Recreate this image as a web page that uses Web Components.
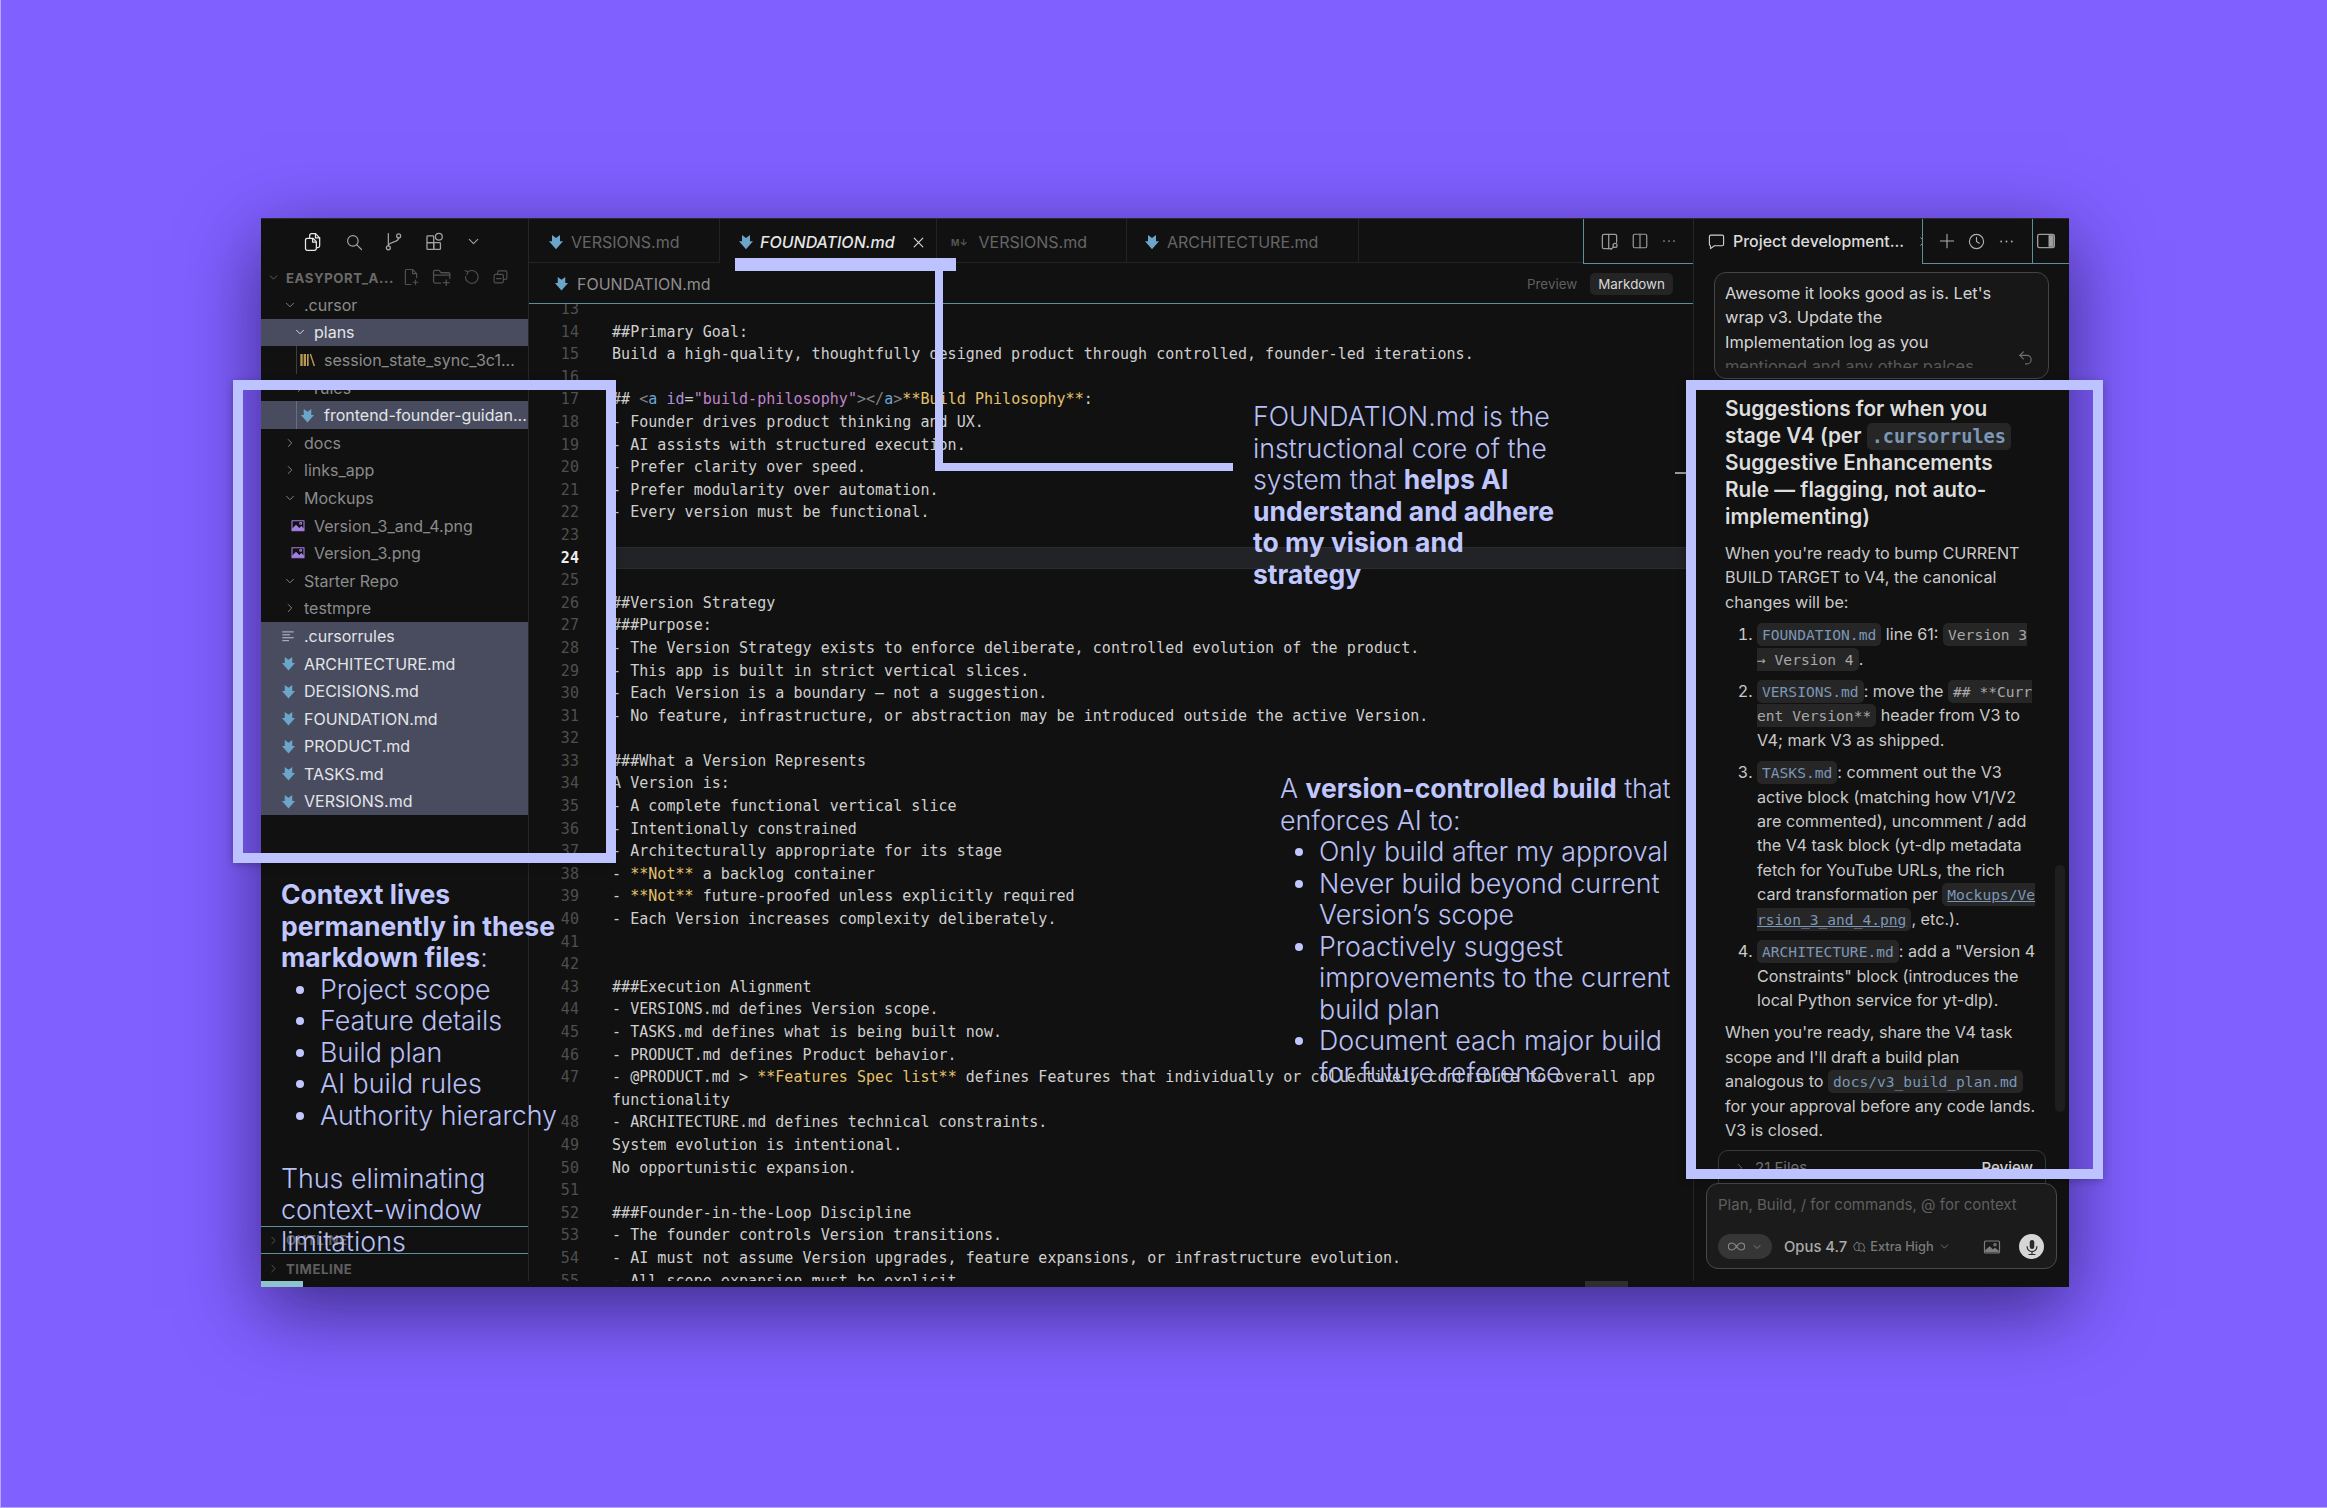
<!DOCTYPE html>
<html lang="en">
<head>
<meta charset="utf-8">
<title>Cursor annotated</title>
<style>
  html, body { margin: 0; padding: 0; }
  body {
    width: 2327px;
    height: 1508px;
    overflow: hidden;
    position: relative;
    box-sizing: border-box;
    padding: 218px 258px 0 261px;
    background: #8060ff;
    box-shadow: inset 1px 0 #b7a8ff, inset 0 -1px #b7a8ff;
    font-family: Inter, "Liberation Sans", sans-serif;
  }
</style>
</head>
<body>

<app-window>
  <side-bar slot="side"></side-bar>
  <editor-pane slot="editor"></editor-pane>
  <chat-panel slot="chat"></chat-panel>
</app-window>

<callout-box style="left:233px;top:380px;width:383px;height:483px"></callout-box>
<callout-box style="left:1686px;top:380px;width:417px;height:799px"></callout-box>
<callout-line style="left:735px;top:258px;width:221px;height:13px"></callout-line>
<callout-line style="left:935px;top:271px;width:8px;height:200px"></callout-line>
<callout-line style="left:935px;top:463px;width:298px;height:8px"></callout-line>

<note-text style="left:1253px;top:401px;width:305px">FOUNDATION.md is the instructional core of the system that <b>helps AI understand and adhere to my vision and strategy</b></note-text>

<note-text style="left:1280px;top:773px;width:397px">
  A <b>version-controlled build</b> that enforces AI to:
  <note-item>Only build after my approval</note-item>
  <note-item>Never build beyond current Version’s scope</note-item>
  <note-item>Proactively suggest improvements to the current build plan</note-item>
  <note-item>Document each major build for future reference</note-item>
</note-text>

<note-text style="left:281px;top:879px;width:285px">
  <b>Context lives permanently in these markdown files</b>:
  <note-item>Project scope</note-item>
  <note-item>Feature details</note-item>
  <note-item>Build plan</note-item>
  <note-item>AI build rules</note-item>
  <note-item>Authority hierarchy</note-item>
  <br>
  Thus eliminating context-window limitations
</note-text>

<script>
const ICONS = {
  files: '<path d="M8 7.5V4.2A2.2 2.2 0 0 1 10.2 2H15l5 5v9.5a2.2 2.2 0 0 1-2.2 2.2H17"/><path d="M15 2v5h5"/><path d="M5.2 7.5H12l4 4v8.3a2.2 2.2 0 0 1-2.2 2.2H5.2A2.2 2.2 0 0 1 3 19.8V9.7a2.2 2.2 0 0 1 2.2-2.2z"/><path d="M11.5 7.5v4.5H16"/>',
  search: '<circle cx="10.5" cy="10.5" r="7"/><path d="M15.8 15.8 22 22"/>',
  branch: '<circle cx="5.5" cy="20" r="2.5"/><circle cx="18.5" cy="5" r="2.5"/><path d="M5.5 17.5V2"/><path d="M18.5 7.5c0 6-13 4.500-13 10"/>',
  blocks: '<rect x="2.500" y="5" width="8.500" height="8.500" rx="1"/><rect x="2.500" y="13.500" width="8.500" height="8.500" rx="1"/><rect x="11" y="13.500" width="8.500" height="8.500" rx="1"/><circle cx="17.500" cy="6" r="4.300"/>',
  down: '<path d="m6 9 6 6 6-6"/>',
  right: '<path d="m9 6 6 6-6 6"/>',
  newfile: '<path d="M12 22H6a1.500 1.500 0 0 1-1.500-1.500v-17A1.500 1.500 0 0 1 6 2h8l5.500 5.500V13"/><path d="M14 2v5.500h5.500"/><path d="M18 16v6M15 19h6"/>',
  newfolder: '<path d="M11 19H3.500A1.500 1.500 0 0 1 2 17.500v-13A1.500 1.500 0 0 1 3.500 3H9l2.500 3H21a1.500 1.500 0 0 1 1.500 1.500V13"/><path d="M2 9h20.500"/><path d="M18 15v7M14.500 18.500h7"/>',
  refresh: '<path d="M7 5.500A9 9 0 1 1 3.500 12"/><path d="M3 3.500 7 5.500 5.500 9.500"/>',
  collapse: '<rect x="3" y="9" width="13" height="12" rx="2"/><path d="M8 9V6a2 2 0 0 1 2-2h9a2 2 0 0 1 2 2v8a2 2 0 0 1-2 2h-3"/><path d="M6.500 15h6"/>',
  markdown: '<path fill="currentColor" stroke="none" d="M6 1.500 12 6l6-4.500V11h4.500L12 23 1.500 11H6z"/>',
  image: '<path d="M3 4h18v15H3z"/><path fill="currentColor" stroke="none" d="M3 19v-3l6-6 5 5 3-3 4 4v3z"/><circle cx="16" cy="8" r="1.500"/>',
  library: '<path fill="currentColor" stroke="none" d="M2 3h3.500v18H2zM7 3h3.500v18H7zM12 3h2.500v18H12zM16 3.500l2-.8L24 20.500l-2 .8z"/>',
  lines: '<path d="M3 5h18M3 10h12M3 15h18M3 20h10"/>',
  bubble: '<path d="M4 3h16a2 2 0 0 1 2 2v11a2 2 0 0 1-2 2H9l-5.500 4V18A2 2 0 0 1 2 16V5a2 2 0 0 1 2-2z"/>',
  plus: '<path d="M12 2v20M2 12h20"/>',
  clock: '<circle cx="12" cy="12" r="10"/><path d="M12 6v6l4 2.500"/>',
  dots: '<circle cx="4.500" cy="12" r="1.300" fill="currentColor" stroke="none"/><circle cx="12" cy="12" r="1.300" fill="currentColor" stroke="none"/><circle cx="19.500" cy="12" r="1.300" fill="currentColor" stroke="none"/>',
  close: '<path d="M4 4l16 16M20 4 4 20"/>',
  split: '<rect x="3" y="3" width="18" height="18" rx="2"/><path d="M12 3v18"/>',
  splitpin: '<path d="M14 21H5a2 2 0 0 1-2-2V5a2 2 0 0 1 2-2h14a2 2 0 0 1 2 2v8"/><path d="M11 3v18"/><circle cx="19" cy="17" r="2.500"/><path d="m17 19-3 3"/>',
  sidepanel: '<rect x="2" y="4" width="20" height="16" rx="2"/><rect fill="currentColor" stroke="none" x="15" y="5" width="6" height="14"/>',
  undo: '<path d="M9 4 4 9l5 5"/><path d="M4 9h10a6 6 0 0 1 6 6v0a6 6 0 0 1-6 6h-2"/>',
  infinity: '<path d="M12 12c-2.500-3.500-4.500-5-6.500-5a5 5 0 0 0 0 10c2 0 4-1.500 6.500-5zm0 0c2.500-3.500 4.500-5 6.500-5a5 5 0 0 1 0 10c-2 0-4-1.500-6.500-5z"/>',
  brain: '<path d="M9 4a3 3 0 0 0-3 3 3.500 3.500 0 0 0-3 3.500A3.500 3.500 0 0 0 4.500 14 3.500 3.500 0 0 0 9 18h3V6.500A3 3 0 0 0 9 4z"/><path d="M12 7a3 3 0 0 1 5-.5 3.500 3.500 0 0 1 3.500 4A3.500 3.500 0 0 1 20 16l2 4-4-2a3.500 3.500 0 0 1-3.500 1L12 18"/>',
  picture: '<rect x="2" y="4" width="20" height="16" rx="1.500"/><path fill="currentColor" stroke="none" d="M3 19v-3l6-5 4 4 3-2 5 4v2z"/><circle cx="16" cy="9" r="1.500"/>',
  mic: '<rect x="9" y="2.500" width="6" height="12" rx="3" fill="currentColor" stroke="none"/><path d="M5.500 11.500a6.500 6.500 0 0 0 13 0M12 18v4M8 22h8"/>'
};

class UiIcon extends HTMLElement {
  connectedCallback() {
    const name = this.getAttribute("name");
    const size = this.getAttribute("size") || 16;
    const weight = this.getAttribute("weight") || 1.6;
    this.attachShadow({ mode: "open" });
    this.shadowRoot.innerHTML = `
      <style>
        :host { display: inline-flex; flex: none; line-height: 0; }
        svg { fill: none; stroke: currentColor; stroke-linecap: round; stroke-linejoin: round; }
      </style>
      <svg width="${size}" height="${size}" viewBox="0 0 24 24" stroke-width="${weight}">${ICONS[name]}</svg>`;
  }
}

class AppWindow extends HTMLElement {
  constructor() {
    super();
    this.attachShadow({ mode: "open" });
    this.shadowRoot.innerHTML = `
      <style>
        :host {
          display: flex;
          flex-direction: column;
          width: 1808px;
          height: 1069px;
          background: #111111;
          border-top: 1px solid #2b2b2b;
          box-sizing: border-box;
          box-shadow: 0 22px 72px rgba(20, 10, 60, 0.62);
          overflow: hidden;
        }
        .main { flex: 1; min-height: 0; display: grid; grid-template-columns: 268px 1164px 376px; }
        .status { height: 6px; display: flex; flex: none; }
        .progress { width: 42px; background: #8dc3cc; }
        .thumb { width: 43px; margin-left: 1282px; background: #2f2f2f; }
      </style>
      <div class="main">
        <slot name="side"></slot>
        <slot name="editor"></slot>
        <slot name="chat"></slot>
      </div>
      <div class="status"><div class="progress"></div><div class="thumb"></div></div>`;
  }
}

class TreeRow extends HTMLElement {
  connectedCallback() {
    const iconX = this.getAttribute("icon-x");
    const textX = this.getAttribute("text-x");
    const icon = this.getAttribute("icon");
    const tint = this.getAttribute("tint") || "currentColor";
    const size = this.getAttribute("size") || 16;
    const guide = this.hasAttribute("guide") ? '<i class="guide"></i>' : "";
    this.attachShadow({ mode: "open" });
    this.shadowRoot.innerHTML = `
      <style>
        :host {
          display: flex;
          align-items: center;
          position: relative;
          height: 27.6px;
          font-size: 16px;
          color: #8b8b8b;
          white-space: nowrap;
          box-sizing: border-box;
          padding-left: ${iconX}px;
        }
        :host([selected]) { background: #484c5e; color: #e3e4e8; }
        .ico { width: ${textX - iconX}px; display: flex; color: ${tint}; }
        .guide { position: absolute; left: 35px; top: 0; bottom: 0; width: 1px; background: #3d3d3d; }
        :host([selected]) .guide { background: #6a6e80; }
      </style>
      ${guide}
      <span class="ico"><ui-icon name="${icon}" size="${size}"></ui-icon></span>
      <slot></slot>`;
  }
}

class SideBar extends HTMLElement {
  constructor() {
    super();
    this.attachShadow({ mode: "open" });
  }

  connectedCallback() {
    const blue = "#6ba5c9";
    const purple = "#a47fe0";
    const mdFiles = ["ARCHITECTURE.md", "DECISIONS.md", "FOUNDATION.md", "PRODUCT.md", "TASKS.md", "VERSIONS.md"];
    this.shadowRoot.innerHTML = `
      <style>
        :host {
          display: flex;
          flex-direction: column;
          min-height: 0;
          border-right: 1px solid #262626;
          box-sizing: border-box;
          overflow: hidden;
          font-family: Inter, "Liberation Sans", sans-serif;
        }
        .top { height: 45px; flex: none; display: flex; align-items: center; padding-left: 42px; gap: 21.5px; color: #a3a3a3; }
        .top ui-icon:first-child { color: #e8e8e8; }
        .root { height: 27px; flex: none; display: flex; align-items: center; padding-left: 6px; color: #6a6a6a; font-size: 13.2px; font-weight: 700; letter-spacing: 0.55px; white-space: nowrap; }
        .root .name { margin-left: 6px; width: 116px; }
        .root .acts { display: flex; gap: 12px; color: #505050; }
        .tree { flex: none; }
        .space { flex: 1; }
        .pane { height: 27px; flex: none; display: flex; align-items: center; padding-left: 6px; gap: 6px; color: #5f5f5f; font-size: 13.2px; font-weight: 700; letter-spacing: 0.55px; }
        .pane:last-child { padding-top: 2px; box-sizing: border-box; }
        .outline { border-top: 1.5px solid #5d8f9c; border-bottom: 1.5px solid #5d8f9c; height: 28px; box-sizing: border-box; }
      </style>
      <div class="top">
        <ui-icon name="files" size="20" weight="1.5"></ui-icon>
        <ui-icon name="search" size="18"></ui-icon>
        <ui-icon name="branch" size="19"></ui-icon>
        <ui-icon name="blocks" size="19"></ui-icon>
        <ui-icon name="down" size="17"></ui-icon>
      </div>
      <div class="root">
        <ui-icon name="down" size="13"></ui-icon>
        <span class="name">EASYPORT_A...</span>
        <span class="acts">
          <ui-icon name="newfile" size="18"></ui-icon>
          <ui-icon name="newfolder" size="19"></ui-icon>
          <ui-icon name="refresh" size="17"></ui-icon>
          <ui-icon name="collapse" size="17"></ui-icon>
        </span>
      </div>
      <div class="tree">
        <tree-row icon="down" icon-x="22" text-x="43" size="14">.cursor</tree-row>
        <tree-row icon="down" icon-x="32" text-x="53" size="14" selected>plans</tree-row>
        <tree-row icon="library" tint="#b99a54" icon-x="38" text-x="63" guide>session_state_sync_3c1...</tree-row>
        <tree-row icon="right" icon-x="32" text-x="53" size="14">rules</tree-row>
        <tree-row icon="markdown" tint="${blue}" icon-x="39" text-x="63" size="15" guide selected>frontend-founder-guidan...</tree-row>
        <tree-row icon="right" icon-x="22" text-x="43" size="14">docs</tree-row>
        <tree-row icon="right" icon-x="22" text-x="43" size="14">links_app</tree-row>
        <tree-row icon="down" icon-x="22" text-x="43" size="14">Mockups</tree-row>
        <tree-row icon="image" tint="${purple}" icon-x="29" text-x="53">Version_3_and_4.png</tree-row>
        <tree-row icon="image" tint="${purple}" icon-x="29" text-x="53">Version_3.png</tree-row>
        <tree-row icon="down" icon-x="22" text-x="43" size="14">Starter Repo</tree-row>
        <tree-row icon="right" icon-x="22" text-x="43" size="14">testmpre</tree-row>
        <tree-row icon="lines" tint="#c9cbd2" icon-x="20" text-x="43" size="14" selected>.cursorrules</tree-row>
        ${mdFiles.map((f) => `<tree-row icon="markdown" tint="${blue}" icon-x="20" text-x="43" size="15" selected>${f}</tree-row>`).join("")}
      </div>
      <div class="space"></div>
      <div class="pane outline"><ui-icon name="right" size="13"></ui-icon>OUTLINE</div>
      <div class="pane"><ui-icon name="right" size="13"></ui-icon>TIMELINE</div>`;
  }
}

const CODE_LINES = [
  [13, ""],
  [14, "##Primary Goal:"],
  [15, "Build a high-quality, thoughtfully designed product through controlled, founder-led iterations."],
  [16, ""],
  [17, '## <i class="g">&lt;</i><i class="b">a</i> <i class="p">id</i>=<i class="m">"build-philosophy"</i><i class="g">&gt;&lt;/</i><i class="b">a</i><i class="g">&gt;</i><i class="y">**Build Philosophy**</i>:'],
  [18, "- Founder drives product thinking and UX."],
  [19, "- AI assists with structured execution."],
  [20, "- Prefer clarity over speed."],
  [21, "- Prefer modularity over automation."],
  [22, "- Every version must be functional."],
  [23, ""],
  [24, ""],
  [25, ""],
  [26, "##Version Strategy"],
  [27, "###Purpose:"],
  [28, "- The Version Strategy exists to enforce deliberate, controlled evolution of the product."],
  [29, "- This app is built in strict vertical slices."],
  [30, "- Each Version is a boundary — not a suggestion."],
  [31, "- No feature, infrastructure, or abstraction may be introduced outside the active Version."],
  [32, ""],
  [33, "###What a Version Represents"],
  [34, "A Version is:"],
  [35, "- A complete functional vertical slice"],
  [36, "- Intentionally constrained"],
  [37, "- Architecturally appropriate for its stage"],
  [38, '- <i class="y">**Not**</i> a backlog container'],
  [39, '- <i class="y">**Not**</i> future-proofed unless explicitly required'],
  [40, "- Each Version increases complexity deliberately."],
  [41, ""],
  [42, ""],
  [43, "###Execution Alignment"],
  [44, "- VERSIONS.md defines Version scope."],
  [45, "- TASKS.md defines what is being built now."],
  [46, "- PRODUCT.md defines Product behavior."],
  [47, '- @PRODUCT.md &gt; <i class="y">**Features Spec list**</i> defines Features that individually or collectively contribute to overall app functionality'],
  [48, "- ARCHITECTURE.md defines technical constraints."],
  [49, "System evolution is intentional."],
  [50, "No opportunistic expansion."],
  [51, ""],
  [52, "###Founder-in-the-Loop Discipline"],
  [53, "- The founder controls Version transitions."],
  [54, "- AI must not assume Version upgrades, feature expansions, or infrastructure evolution."],
  [55, "- All scope expansion must be explicit."]
];

class EditorPane extends HTMLElement {
  constructor() {
    super();
    this.attachShadow({ mode: "open" });
  }

  connectedCallback() {
    const rows = CODE_LINES.map(([n, html]) => `
      <div class="row ${n === 24 ? "active" : ""}"><span class="num">${n}</span><span class="txt">${html || "&#8203;"}</span></div>`).join("");
    this.shadowRoot.innerHTML = `
      <style>
        :host {
          display: flex;
          flex-direction: column;
          min-height: 0;
          overflow: hidden;
          position: relative;
          font-family: Inter, "Liberation Sans", sans-serif;
        }
        .tabs { height: 45px; flex: none; display: flex; box-sizing: border-box; }
        .tab { display: flex; align-items: center; box-sizing: border-box; height: 44px; padding-top: 3px; border-right: 1px solid #242424; border-bottom: 1px solid #242424; color: #666; font-size: 16px; white-space: nowrap; }
        .tab.active { color: #e6e6e6; font-style: italic; font-weight: 500; border-bottom-color: transparent; }
        .tab ui-icon { color: #6ba5c9; margin-right: 7px; }
        .tab .m { color: #555; font-size: 9px; font-weight: 700; margin-right: 11px; letter-spacing: 0; }
        .fill { flex: 1; height: 44px; box-sizing: border-box; border-bottom: 1px solid #242424; }
        .tools { width: 110px; height: 45px; box-sizing: border-box; border-left: 1.5px solid #5d8f9c; border-bottom: 1.5px solid #5d8f9c; display: flex; align-items: center; padding-left: 16px; gap: 12px; color: #9a9a9a; }
        .crumb { height: 40px; flex: none; box-sizing: border-box; border-bottom: 1.5px solid #5d8f9c; display: flex; align-items: center; padding-left: 25px; color: #8e8e8e; font-size: 16px; }
        .crumb ui-icon { color: #6ba5c9; margin-right: 8px; }
        .crumb .sp { flex: 1; }
        .crumb .pv { color: #5f5f5f; font-size: 13.4px; margin-right: 13px; }
        .crumb .mdp { color: #d8d8d8; font-size: 13.4px; background: #242424; border-radius: 5px; padding: 3px 8px; margin-right: 20px; }
        .code { flex: 1; min-height: 0; overflow: hidden; font-family: "DejaVu Sans Mono", "Liberation Mono", monospace; font-size: 15px; letter-spacing: 0.04px; line-height: 22.6px; color: #cfcfcf; }
        .lines { margin-top: -6px; }
        .row { display: flex; }
        .num { width: 50px; flex: none; text-align: right; color: #4f4f4f; }
        .txt { flex: 1; margin-left: 28px; padding-left: 5px; padding-right: 20px; white-space: pre-wrap; font-style: normal; }
        .row.active .num { color: #ededed; font-weight: 700; }
        .row.active .txt { background: #212327; box-shadow: inset 0 1px #2a2c30, inset 0 -1px #2a2c30; }
        i { font-style: normal; }
        .g { color: #808080; } .b { color: #6aa6d8; } .p { color: #a993dc; } .m { color: #c084cc; } .y { color: #e2c26e; }
        .mark { position: absolute; left: 1146px; top: 253px; width: 11px; height: 1.500px; background: #999; }
      </style>
      <div class="tabs">
        <div class="tab" style="width:191px;padding-left:19px"><ui-icon name="markdown" size="16"></ui-icon>VERSIONS.md</div>
        <div class="tab active" style="width:217px;padding-left:18px"><ui-icon name="markdown" size="16" style="margin-right:6px"></ui-icon>FOUNDATION.md<ui-icon name="close" size="13" weight="2" style="color:#ddd;margin:0 0 0 17px"></ui-icon></div>
        <div class="tab" style="width:190px;padding-left:14px"><span class="m">M↓</span>VERSIONS.md</div>
        <div class="tab" style="width:232px;padding-left:17px"><ui-icon name="markdown" size="16"></ui-icon>ARCHITECTURE.md</div>
        <div class="fill"></div>
        <div class="tools">
          <ui-icon name="splitpin" size="19"></ui-icon>
          <ui-icon name="split" size="18"></ui-icon>
          <ui-icon name="dots" size="16"></ui-icon>
        </div>
      </div>
      <div class="crumb">
        <ui-icon name="markdown" size="15"></ui-icon>FOUNDATION.md
        <span class="sp"></span><span class="pv">Preview</span><span class="mdp">Markdown</span>
      </div>
      <div class="code"><div class="lines">${rows}</div></div>
      <div class="mark"></div>`;
  }
}

class ChatPanel extends HTMLElement {
  constructor() {
    super();
    this.attachShadow({ mode: "open" });
  }

  connectedCallback() {
    this.shadowRoot.innerHTML = `
      <style>
        :host {
          display: flex;
          flex-direction: column;
          min-height: 0;
          overflow: hidden;
          border-left: 1px solid #262626;
          box-sizing: border-box;
          font-family: Inter, "Liberation Sans", sans-serif;
          font-size: 16.2px;
          color: #c9c9c9;
        }
        .head { height: 45px; flex: none; display: flex; color: #dcdcdc; }
        .title { width: 228px; display: flex; align-items: center; padding-left: 14px; box-sizing: border-box; gap: 8px; font-size: 15.9px; font-weight: 500; white-space: nowrap; overflow: hidden; }
        .acts { width: 110px; box-sizing: border-box; border-left: 1.5px solid #5d8f9c; border-bottom: 1.5px solid #5d8f9c; display: flex; align-items: center; padding-left: 16px; gap: 13px; color: #b0b0b0; }
        .panel { flex: 1; box-sizing: border-box; border-left: 1.5px solid #5d8f9c; border-bottom: 1.5px solid #5d8f9c; display: flex; align-items: center; padding-left: 3px; color: #9d9d9d; }
        .scroll { flex: 1; min-height: 0; overflow: hidden; position: relative; }
        .bar { position: absolute; left: 361px; top: 601px; width: 10px; height: 247px; border-radius: 5px; background: #1e1e1e; }
        .msg { position: relative; height: 107px; box-sizing: border-box; margin: 8px 20px 0 20px; padding: 8px 36px 0 10px; border: 1px solid #454545; border-radius: 12px; background: #171717; font-size: 16.4px; line-height: 24.400px; color: #d4d4d4; }
        .msg .clip { height: 87px; overflow: hidden; white-space: nowrap; }
        .msg .fade { color: #585858; }
        .msg ui-icon { position: absolute; right: 14px; bottom: 12px; color: #707070; }
        .body { margin: 16px 31px 0 31px; line-height: 24.400px; }
        h2 { margin: 0 0 11px; font-size: 20.800px; font-weight: 600; line-height: 27px; color: #dedede; }
        p { margin: 0 0 8px; }
        ol { margin: 0; padding: 0 0 0 32px; }
        li { margin: 0 0 8px; }
        li::marker { color: #c9c9c9; }
        code { font-family: "DejaVu Sans Mono", "Liberation Mono", monospace; font-size: 14.6px; line-height: 1; background: #262626; border-radius: 5px; padding: 3px 5px; color: #a9a9a9; word-break: break-all; }
        code.f { color: #7c97b6; }
        code.u { color: #7c97b6; text-decoration: underline; }
        h2 code { font-size: 18.600px; padding: 3px 5px; }
        .filesbox { margin: 6px 23px 0 24px; height: 40px; box-sizing: border-box; border: 1px solid #383838; border-radius: 10px 10px 0 0; display: flex; align-items: flex-start; padding: 7px 12px 0 14px; gap: 8px; color: #6f6f6f; font-size: 15px; line-height: 20px; }
        .filesbox b { margin-left: auto; font-weight: 500; color: #d0d0d0; font-size: 15px; }
        .filesbox ui-icon { margin-top: 3px; }
        .input { height: 86px; flex: none; box-sizing: border-box; margin: 0 12px 12px 12px; background: #1b1b1b; border: 1px solid #4a4a4a; border-radius: 12px; padding: 9px 11px 0; position: relative; }
        .ph { color: #5f5f5f; font-size: 15px; line-height: 24px; white-space: nowrap; }
        .ctl { position: absolute; left: 11px; right: 12px; top: 50px; display: flex; align-items: center; }
        .mode { width: 54px; height: 25px; border-radius: 13px; background: #363636; display: flex; align-items: center; justify-content: center; gap: 6px; color: #8a8a8a; }
        .model { margin-left: 12px; color: #ababab; font-size: 14.8px; font-weight: 500; }
        .brain { margin-left: 5px; color: #7d7d7d; display: flex; }
        .lvl { margin-left: 4px; color: #7a7a7a; font-size: 12.800px; font-weight: 500; }
        .chev { margin-left: 4px; color: #7a7a7a; display: flex; }
        .pic { margin-left: auto; color: #7d7d7d; display: flex; margin-right: 18px; }
        .micb { width: 25px; height: 25px; border-radius: 50%; background: #d6d6d6; color: #2a2a2a; display: flex; align-items: center; justify-content: center; }
      </style>
      <div class="head">
        <div class="title"><ui-icon name="bubble" size="17" style="color:#cfcfcf"></ui-icon>Project development...<ui-icon name="right" size="15" style="margin-left:3px;color:#999"></ui-icon></div>
        <div class="acts">
          <ui-icon name="plus" size="16"></ui-icon>
          <ui-icon name="clock" size="17"></ui-icon>
          <ui-icon name="dots" size="17"></ui-icon>
        </div>
        <div class="panel"><ui-icon name="sidepanel" size="20"></ui-icon></div>
      </div>
      <div class="scroll">
        <div class="msg"><div class="clip">Awesome it looks good as is. Let's<br>wrap v3. Update the<br>Implementation log as you<br><span class="fade">mentioned and any other palces</span></div><ui-icon name="undo" size="17"></ui-icon></div>
        <div class="body">
          <h2>Suggestions for when you stage V4 (per <code class="f">.cursorrules</code> Suggestive Enhancements Rule — flagging, not auto-implementing)</h2>
          <p>When you're ready to bump CURRENT BUILD TARGET to V4, the canonical changes will be:</p>
          <ol>
            <li><code class="f">FOUNDATION.md</code> line 61: <code>Version 3 → Version 4</code>.</li>
            <li><code class="f">VERSIONS.md</code>: move the <code>## **Current Version**</code> header from V3 to V4; mark V3 as shipped.</li>
            <li><code class="f">TASKS.md</code>: comment out the V3 active block (matching how V1/V2 are commented), uncomment / add the V4 task block (yt-dlp metadata fetch for YouTube URLs, the rich card transformation per <code class="u">Mockups/Version_3_and_4.png</code>, etc.).</li>
            <li><code class="f">ARCHITECTURE.md</code>: add a "Version 4 Constraints" block (introduces the local Python service for yt-dlp).</li>
          </ol>
          <p>When you're ready, share the V4 task scope and I'll draft a build plan analogous to <code class="f">docs/v3_build_plan.md</code> for your approval before any code lands. V3 is closed.</p>
        </div>
        <div class="filesbox"><ui-icon name="right" size="14"></ui-icon>21 Files<b>Review</b></div>
        <div class="bar"></div>
      </div>
      <div class="input">
        <div class="ph">Plan, Build, / for commands, @ for context</div>
        <div class="ctl">
          <span class="mode"><ui-icon name="infinity" size="17"></ui-icon><ui-icon name="down" size="12"></ui-icon></span>
          <span class="model">Opus 4.7</span>
          <span class="brain"><ui-icon name="brain" size="14"></ui-icon></span>
          <span class="lvl">Extra High</span>
          <span class="chev"><ui-icon name="down" size="13"></ui-icon></span>
          <span class="pic"><ui-icon name="picture" size="18"></ui-icon></span>
          <span class="micb"><ui-icon name="mic" size="18"></ui-icon></span>
        </div>
      </div>`;
  }
}

class CalloutBox extends HTMLElement {
  constructor() {
    super();
    this.attachShadow({ mode: "open" });
    this.shadowRoot.innerHTML = `
      <style>
        :host {
          position: absolute;
          box-sizing: border-box;
          border: 10px solid #bcc3ff;
          box-shadow: 0 2px 8px rgba(0, 0, 0, 0.25);
          pointer-events: none;
        }
      </style>`;
  }
}

class CalloutLine extends HTMLElement {
  constructor() {
    super();
    this.attachShadow({ mode: "open" });
    this.shadowRoot.innerHTML = `
      <style>
        :host { position: absolute; background: #bcc3ff; }
      </style>`;
  }
}

class NoteText extends HTMLElement {
  constructor() {
    super();
    this.attachShadow({ mode: "open" });
    this.shadowRoot.innerHTML = `
      <style>
        :host {
          position: absolute;
          display: block;
          font-family: Inter, "Liberation Sans", sans-serif;
          font-size: 26.8px;
          font-weight: 300;
          line-height: 31.500px;
          color: #b9c0f6;
        }
        ::slotted(b) { font-weight: 700; font-size: 26.5px; color: #c0c7ff; }
      </style>
      <slot></slot>`;
  }
}

class NoteItem extends HTMLElement {
  constructor() {
    super();
    this.attachShadow({ mode: "open" });
    this.shadowRoot.innerHTML = `
      <style>
        :host { display: block; position: relative; padding-left: 39px; }
        :host::before {
          content: "";
          position: absolute;
          left: 15px;
          top: 12px;
          width: 8px;
          height: 8px;
          border-radius: 50%;
          background: #c0c7ff;
        }
      </style>
      <slot></slot>`;
  }
}

customElements.define("ui-icon", UiIcon);
customElements.define("app-window", AppWindow);
customElements.define("tree-row", TreeRow);
customElements.define("side-bar", SideBar);
customElements.define("editor-pane", EditorPane);
customElements.define("chat-panel", ChatPanel);
customElements.define("callout-box", CalloutBox);
customElements.define("callout-line", CalloutLine);
customElements.define("note-text", NoteText);
customElements.define("note-item", NoteItem);
</script>
</body>
</html>
